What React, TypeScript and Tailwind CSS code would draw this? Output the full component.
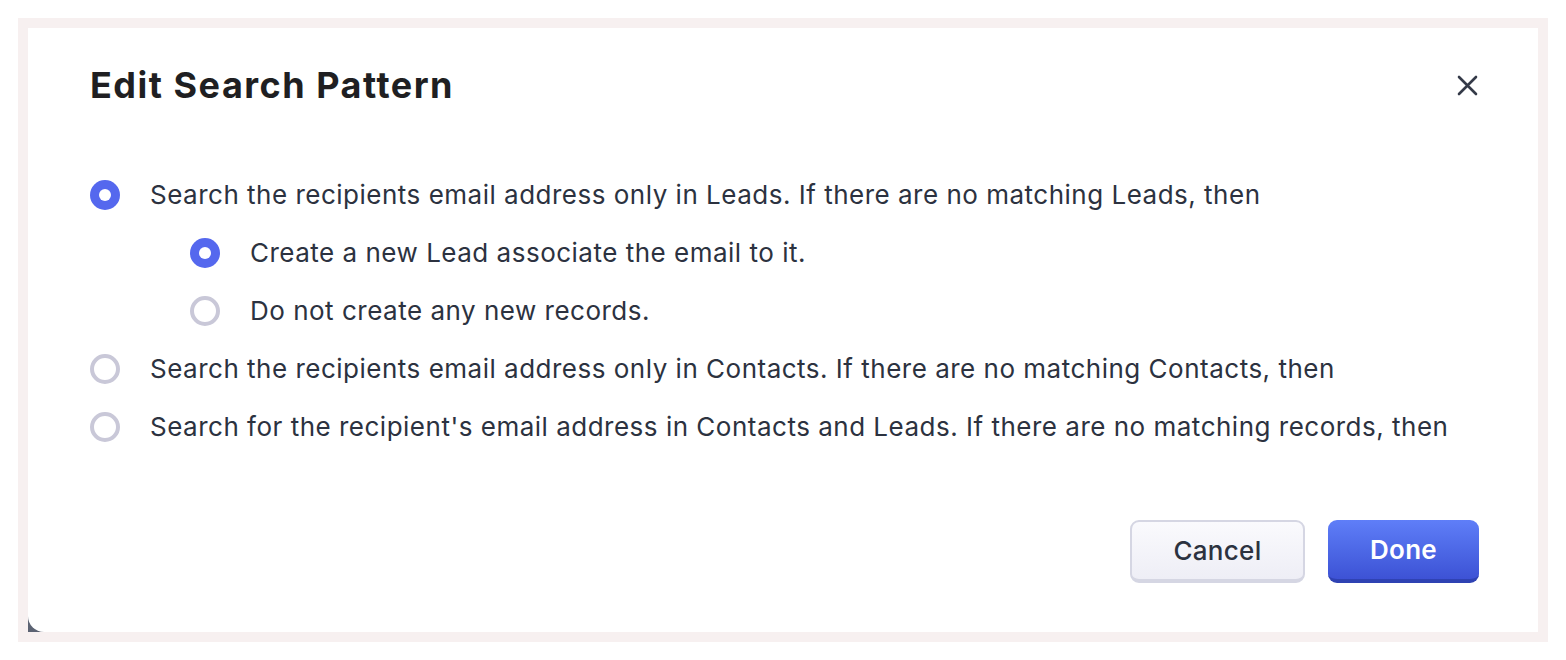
import React, { useState } from "react";

type Option = {
  id: string;
  label: string;
  indent?: boolean;
  group: "main" | "sub";
};

const options: Option[] = [
  {
    id: "leads",
    label:
      "Search the recipients email address only in Leads. If there are no matching Leads, then",
    group: "main",
  },
  {
    id: "create",
    label: "Create a new Lead associate the email to it.",
    indent: true,
    group: "sub",
  },
  {
    id: "none",
    label: "Do not create any new records.",
    indent: true,
    group: "sub",
  },
  {
    id: "contacts",
    label:
      "Search the recipients email address only in Contacts. If there are no matching Contacts, then",
    group: "main",
  },
  {
    id: "both",
    label:
      "Search for the recipient's email address in Contacts and Leads. If there are no matching records, then",
    group: "main",
  },
];

const Radio = ({ checked }: { checked: boolean }) =>
  checked ? (
    <span className="flex h-[30px] w-[30px] shrink-0 items-center justify-center rounded-full bg-[#5568ee]">
      <span className="h-[12px] w-[12px] rounded-full bg-white" />
    </span>
  ) : (
    <span className="h-[30px] w-[30px] shrink-0 rounded-full border-[4px] border-[#c9c8d8] bg-white" />
  );

const App = () => {
  const [main, setMain] = useState("leads");
  const [sub, setSub] = useState("create");

  return (
    <div
      className="h-[660px] w-full bg-white p-[18px]"
      style={{ fontFamily: "Inter, 'Noto Sans', sans-serif" }}
    >
      <div className="h-[624px] w-[1530px] bg-[#f7f0f0] p-[10px]">
        {/* dark backdrop peeks through the rounded bottom-left corner */}
        <div className="h-full w-full bg-gradient-to-t from-[#5b6272] to-[#aab0bd]">
          <div className="flex h-full w-full flex-col rounded-bl-[16px] bg-white pl-[62px] pr-[59px]">
            {/* Header */}
            <div className="flex items-start justify-between pt-[37px]">
              <h2 className="text-[36px] font-bold leading-[40px] tracking-[1.5px] text-[#1f1f22]">
                Edit Search Pattern
              </h2>
              <button className="mt-[8px] flex h-[24px] w-[24px] items-center justify-center text-[#343a48]">
                <svg width="21" height="21" viewBox="0 0 21 21" fill="none">
                  <path
                    d="M2 2L19 19M19 2L2 19"
                    stroke="currentColor"
                    strokeWidth="2.6"
                    strokeLinecap="round"
                  />
                </svg>
              </button>
            </div>

            {/* Options */}
            <div className="mt-[75px] flex flex-col gap-[28px]">
              {options.map((o) => {
                const checked =
                  o.group === "main" ? main === o.id : sub === o.id;
                return (
                  <label
                    key={o.id}
                    onClick={() =>
                      o.group === "main" ? setMain(o.id) : setSub(o.id)
                    }
                    className={`flex cursor-pointer items-center gap-[30px] ${
                      o.indent ? "pl-[100px]" : ""
                    }`}
                  >
                    <Radio checked={checked} />
                    <span className="whitespace-nowrap text-[26px] leading-[30px] tracking-[0.5px] text-[#2c3240]">
                      {o.label}
                    </span>
                  </label>
                );
              })}
            </div>

            {/* Footer */}
            <div className="mt-auto mb-[49px] flex justify-end gap-[23px]">
              <button className="h-[63px] w-[175px] rounded-[9px] border-2 border-b-[4px] border-[#d5d6e3] bg-gradient-to-b from-[#fafafd] to-[#eeeef6] text-[26px] font-medium tracking-[0.3px] text-[#2c3240]">
                Cancel
              </button>
              <button className="h-[63px] w-[151px] rounded-[9px] border-b-[4px] border-[#2f42b3] bg-gradient-to-b from-[#5f7ef8] to-[#3d52d5] text-[26px] font-semibold tracking-[0.3px] text-white">
                Done
              </button>
            </div>
          </div>
        </div>
      </div>
    </div>
  );
};

export default App;
